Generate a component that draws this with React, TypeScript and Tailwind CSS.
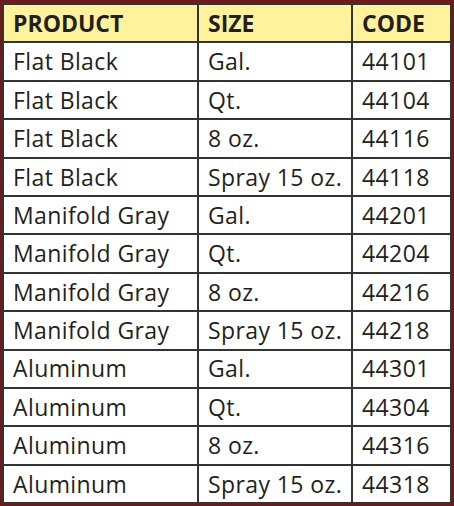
import React from "react";

const rows: [string, string, string][] = [
  ["Flat Black", "Gal.", "44101"],
  ["Flat Black", "Qt.", "44104"],
  ["Flat Black", "8 oz.", "44116"],
  ["Flat Black", "Spray 15 oz.", "44118"],
  ["Manifold Gray", "Gal.", "44201"],
  ["Manifold Gray", "Qt.", "44204"],
  ["Manifold Gray", "8 oz.", "44216"],
  ["Manifold Gray", "Spray 15 oz.", "44218"],
  ["Aluminum", "Gal.", "44301"],
  ["Aluminum", "Qt.", "44304"],
  ["Aluminum", "8 oz.", "44316"],
  ["Aluminum", "Spray 15 oz.", "44318"],
];

const cell =
  "flex items-center h-[38.4px] border-r-2 border-b-2 border-[#333333] pl-[9px] whitespace-nowrap";

export default function App() {
  return (
    <div
      className="w-[454px] h-[506px] bg-[#6e1a1c] pt-[3px] pl-[2px] pr-[2px] text-[#231f20]"
      style={{ fontFamily: '"Open Sans", "Noto Sans", sans-serif' }}
    >
      <div className="grid grid-cols-[195px_154px_99px] border-t-2 border-l-2 border-[#333333] bg-white">
        {["PRODUCT", "SIZE", "CODE"].map((h) => (
          <div key={h} className={`${cell} bg-[#fef39c] font-bold text-[23px]`}>
            {h}
          </div>
        ))}
        {rows.map((r, i) => (
          <React.Fragment key={i}>
            {r.map((v, j) => (
              <div key={j} className={`${cell} text-[23px] tracking-[0.4px]`}>
                {v}
              </div>
            ))}
          </React.Fragment>
        ))}
      </div>
    </div>
  );
}
